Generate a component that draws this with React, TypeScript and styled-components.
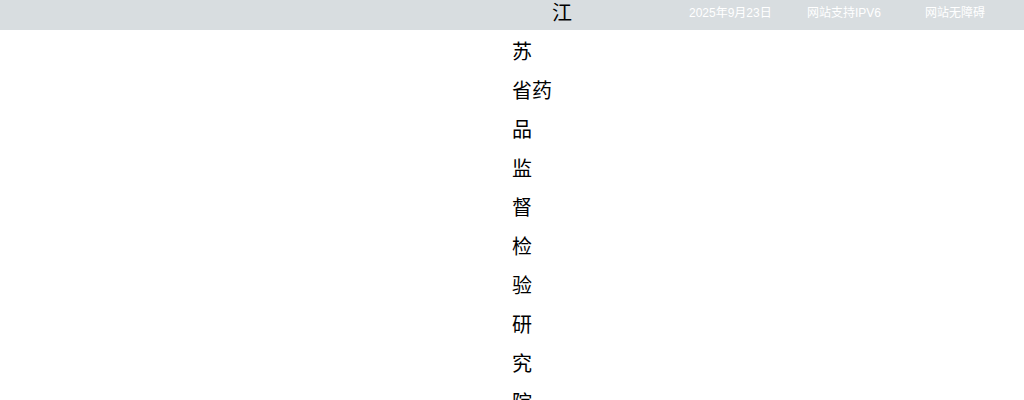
import React from 'react';
import styled, { createGlobalStyle } from 'styled-components';

const GlobalStyle = createGlobalStyle`
  html, body {
    margin: 0;
    padding: 0;
    background: #ffffff;
  }
  body {
    min-height: 400px;
    font-family: 'Liberation Sans', 'Noto Sans CJK SC', sans-serif;
  }
`;

const Page = styled.div`
  min-height: 400px;
  overflow: hidden;
`;

const TopBar = styled.div`
  display: flex;
  align-items: flex-start;
  height: 30px;
  background-color: #d8dde0;
  padding-left: 512px;
`;

const Title = styled.h1`
  position: relative;
  z-index: 1;
  width: 30px;
  margin: -8px 0 0;
  font-size: 20px;
  font-weight: normal;
  line-height: 39px;
  text-indent: 40px;
  color: #000;
  font-family: 'Noto Sans CJK SC', sans-serif;
  word-break: break-all;
`;

const Keep = styled.span`
  white-space: nowrap;
`;

const Links = styled.ul`
  display: flex;
  margin: 0 0 0 auto;
  padding: 0;
  list-style: none;
`;

const LinkItem = styled.li<{ $w: number }>`
  width: ${(p) => p.$w}px;
  font-size: 12px;
  line-height: 26px;
  color: #ffffff;
  white-space: nowrap;
`;

export default function App() {
  return (
    <Page>
      <GlobalStyle />
      <TopBar>
        <Title>
          江苏<Keep>省药</Keep>品监督检验研究院
        </Title>
        <Links>
          <LinkItem $w={118}>2025年9月23日</LinkItem>
          <LinkItem $w={118}>网站支持IPV6</LinkItem>
          <LinkItem $w={99}>网站无障碍</LinkItem>
        </Links>
      </TopBar>
    </Page>
  );
}
